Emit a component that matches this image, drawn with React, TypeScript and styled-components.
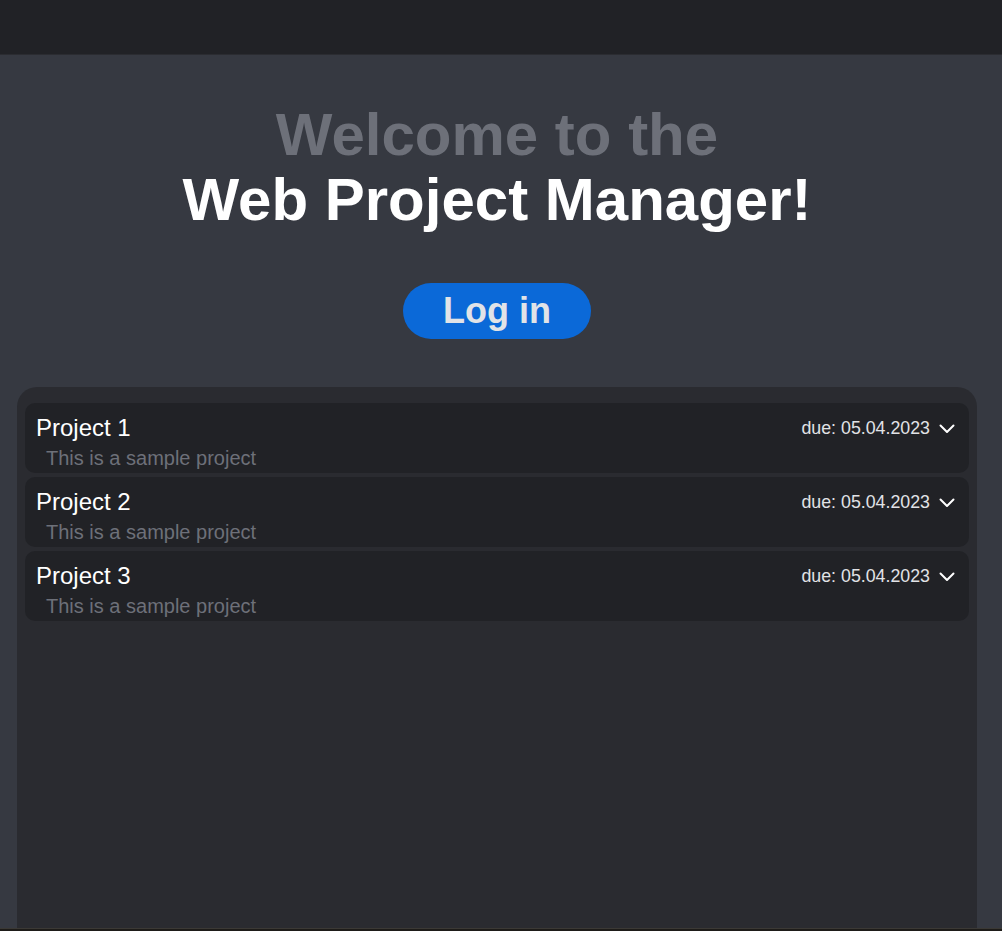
import React from "react";
import styled, { createGlobalStyle } from "styled-components";

const GlobalStyle = createGlobalStyle`
  html, body {
    margin: 0;
    padding: 0;
    background: #363941;
    font-family: "Liberation Sans", Arial, sans-serif;
  }
  * { box-sizing: border-box; }
`;

const Page = styled.div`
  display: flex;
  flex-direction: column;
  min-height: 931px;
`;

const TopBar = styled.header`
  height: 55px;
  background: #212226;
  border-bottom: 1px solid #2b2c31;
  flex-shrink: 0;
`;

const Main = styled.main`
  flex: 1;
  display: flex;
  flex-direction: column;
  align-items: center;
  padding: 47px 8px 0 0;
`;

const Heading = styled.h1`
  margin: 0;
  text-align: center;
  font-size: 60px;
  line-height: 65px;
  font-weight: 700;
  color: #ffffff;
`;

const Muted = styled.span`
  display: block;
  color: #6d7079;
`;

const Strong = styled.span`
  display: block;
`;

const LoginButton = styled.button`
  margin-top: 51px;
  width: 188px;
  height: 56px;
  border: none;
  border-radius: 28px;
  background: #0b69d8;
  color: #e1e3e7;
  font-family: "Liberation Sans", Arial, sans-serif;
  font-size: 36px;
  font-weight: 700;
  line-height: 1;
  cursor: pointer;
`;

const Panel = styled.section`
  margin-top: 48px;
  width: 960px;
  flex: 1;
  min-height: 541px;
  background: #2a2b30;
  border-radius: 20px 20px 0 0;
  padding: 16px 8px;
  display: flex;
  flex-direction: column;
  gap: 4px;
`;

const Row = styled.div`
  height: 70px;
  background: #212226;
  border-radius: 10px;
  padding: 11px 14px 0 11px;
  display: flex;
  justify-content: space-between;
  align-items: flex-start;
`;

const Info = styled.div`
  display: flex;
  flex-direction: column;
`;

const Title = styled.div`
  font-size: 24px;
  color: #ffffff;
  line-height: 28px;
`;

const Subtitle = styled.div`
  margin-top: 5px;
  padding-left: 10px;
  font-size: 20px;
  line-height: 23px;
  color: #6d7079;
`;

const Due = styled.div`
  display: flex;
  align-items: center;
  gap: 9px;
  margin-top: 4px;
  font-size: 17.8px;
  line-height: 21px;
  color: #e2e3e6;
`;

const Footer = styled.div`
  height: 3px;
  background: #1e1c19;
  border-top: 1px solid #3b3935;
  flex-shrink: 0;
`;

const Chevron = () => (
  <svg width="16" height="10" viewBox="0 0 16 10" fill="none">
    <polyline
      points="1.5,1.5 8,8 14.5,1.5"
      stroke="#ffffff"
      strokeWidth="2"
      strokeLinecap="round"
      strokeLinejoin="round"
    />
  </svg>
);

const projects = [
  { name: "Project 1", desc: "This is a sample project", due: "05.04.2023" },
  { name: "Project 2", desc: "This is a sample project", due: "05.04.2023" },
  { name: "Project 3", desc: "This is a sample project", due: "05.04.2023" },
];

export default function App() {
  return (
    <>
      <GlobalStyle />
      <Page>
        <TopBar />
        <Main>
          <Heading>
            <Muted>Welcome to the</Muted>
            <Strong>Web Project Manager!</Strong>
          </Heading>
          <LoginButton>Log in</LoginButton>
          <Panel>
            {projects.map((p) => (
              <Row key={p.name}>
                <Info>
                  <Title>{p.name}</Title>
                  <Subtitle>{p.desc}</Subtitle>
                </Info>
                <Due>
                  due: {p.due}
                  <Chevron />
                </Due>
              </Row>
            ))}
          </Panel>
        </Main>
        <Footer />
      </Page>
    </>
  );
}
